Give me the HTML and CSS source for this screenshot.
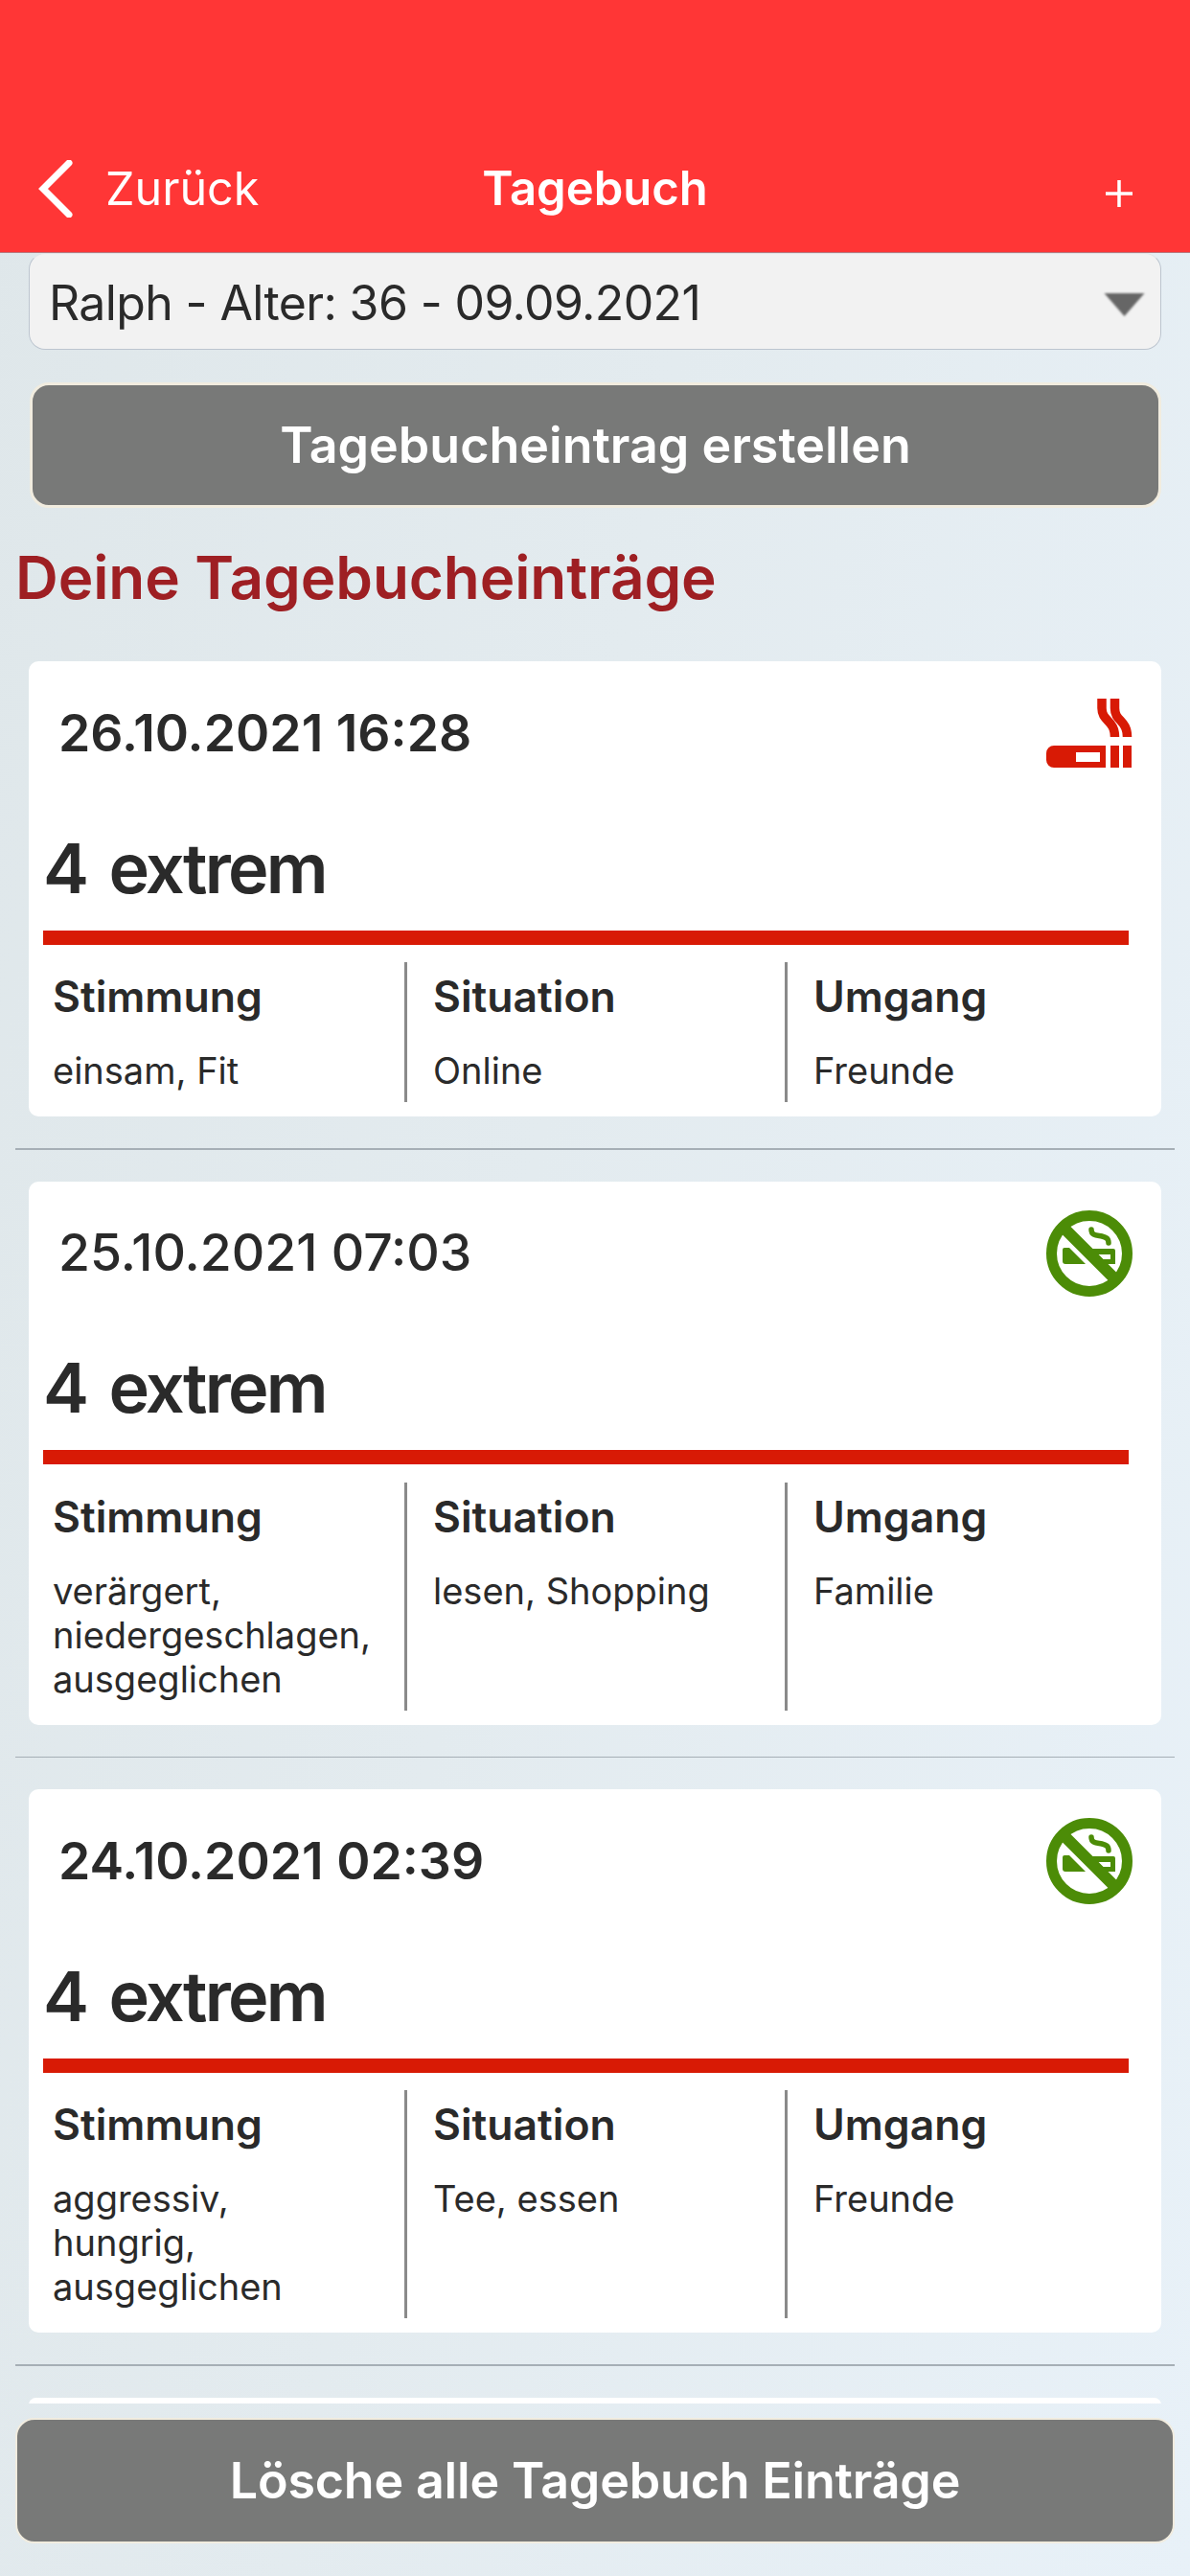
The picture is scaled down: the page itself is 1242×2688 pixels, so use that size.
FILE: index.html
```html
<!DOCTYPE html>
<html lang="de">
<head>
    <meta charset="UTF-8">
    <meta name="viewport" content="width=device-width, initial-scale=1.0">
    <title>Tagebuch</title>
    <link rel="stylesheet" href="styles.css">
</head>
<body>
    <header class="nav-bar">
        <a class="nav-back">
            <svg class="back-icon" viewBox="0 0 36 60"><path d="M32 3 L5 30 L32 57" /></svg>
            <span>Zurück</span>
        </a>
        <span class="nav-title">Tagebuch</span>
        <svg class="plus-icon" viewBox="0 0 28 28"><path d="M14 0 V28 M0 14 H28" /></svg>
    </header>

    <div class="picker">
        <span>Ralph - Alter: 36 - 09.09.2021</span>
        <svg class="picker-arrow" viewBox="0 0 42 24"><path d="M0 0 H42 L21 24 Z" /></svg>
    </div>

    <button class="btn btn-create">Tagebucheintrag erstellen</button>

    <h2 class="section-title">Deine Tagebucheinträge</h2>

    <main class="entries">
        <section class="entry">
            <div class="entry-head">
                <span class="entry-date">26.10.2021 16:28</span>
                <svg class="entry-icon icon-smoke" viewBox="0 0 90 72">
                    <path class="fill" fill-rule="evenodd" d="M8 49 H62 V72 H8 A8 8 0 0 1 0 64 V57 A8 8 0 0 1 8 49 Z M31 56 V66 H56 V56 Z" />
                    <rect class="fill" x="67" y="49" width="9" height="23" />
                    <rect class="fill" x="80" y="49" width="9" height="23" />
                    <path class="smoke" d="M58 0 V10 C58 24 71.500 22 71.500 40" />
                    <path class="smoke" d="M71.500 0 V10 C71.500 24 84.500 22 84.500 40" />
                </svg>
            </div>
            <div class="entry-level">4 extrem</div>
            <div class="entry-bar"></div>
            <div class="entry-cols">
                <div class="entry-col">
                    <h4>Stimmung</h4>
                    <p>einsam, Fit</p>
                </div>
                <div class="entry-col">
                    <h4>Situation</h4>
                    <p>Online</p>
                </div>
                <div class="entry-col">
                    <h4>Umgang</h4>
                    <p>Freunde</p>
                </div>
            </div>
        </section>
        <hr class="entry-line">

        <section class="entry">
            <div class="entry-head">
                <span class="entry-date entry-date-light">25.10.2021 07:03</span>
                <svg class="entry-icon icon-nosmoke" viewBox="0 0 90 90">
                    <path class="fill" d="M19 39 H24 L41 56 H20 A3 3 0 0 1 17 53 V41 A2 2 0 0 1 19 39 Z" />
                    <path class="fill" fill-rule="evenodd" d="M44 40 H70 A2 2 0 0 1 72 42 V56 H60 Z M54 46 L59 51 H67 V46 Z" />
                    <path class="wisp" d="M47 20 C47 27 54 26 58 27 C62 28 65 29 65 34" />
                    <circle class="ring" cx="45" cy="45" r="39.500" />
                    <path class="slash" d="M16 16 L74 74" />
                </svg>
            </div>
            <div class="entry-level">4 extrem</div>
            <div class="entry-bar"></div>
            <div class="entry-cols">
                <div class="entry-col">
                    <h4>Stimmung</h4>
                    <p>verärgert, niedergeschlagen, ausgeglichen</p>
                </div>
                <div class="entry-col">
                    <h4>Situation</h4>
                    <p>lesen, Shopping</p>
                </div>
                <div class="entry-col">
                    <h4>Umgang</h4>
                    <p>Familie</p>
                </div>
            </div>
        </section>
        <hr class="entry-line">

        <section class="entry">
            <div class="entry-head">
                <span class="entry-date">24.10.2021 02:39</span>
                <svg class="entry-icon icon-nosmoke" viewBox="0 0 90 90">
                    <path class="fill" d="M19 39 H24 L41 56 H20 A3 3 0 0 1 17 53 V41 A2 2 0 0 1 19 39 Z" />
                    <path class="fill" fill-rule="evenodd" d="M44 40 H70 A2 2 0 0 1 72 42 V56 H60 Z M54 46 L59 51 H67 V46 Z" />
                    <path class="wisp" d="M47 20 C47 27 54 26 58 27 C62 28 65 29 65 34" />
                    <circle class="ring" cx="45" cy="45" r="39.500" />
                    <path class="slash" d="M16 16 L74 74" />
                </svg>
            </div>
            <div class="entry-level">4 extrem</div>
            <div class="entry-bar"></div>
            <div class="entry-cols">
                <div class="entry-col">
                    <h4>Stimmung</h4>
                    <p>aggressiv, hungrig, ausgeglichen</p>
                </div>
                <div class="entry-col">
                    <h4>Situation</h4>
                    <p>Tee, essen</p>
                </div>
                <div class="entry-col">
                    <h4>Umgang</h4>
                    <p>Freunde</p>
                </div>
            </div>
        </section>
        <hr class="entry-line">

        <section class="entry"></section>
    </main>

    <button class="btn btn-clear">Lösche alle Tagebuch Einträge</button>
</body>
</html>
```

FILE: styles.css
```css
* {
    box-sizing: border-box;
}
body {
    margin: 0;
    height: 2688px;
    overflow: hidden;
    display: flex;
    flex-direction: column;
    font-family: Inter, 'Noto Sans', sans-serif;
    color: #2a2a2a;
    background: linear-gradient(100deg, #dfe7ea 0%, #e3ebef 45%, #e8f1f8 100%);
}

/* top bar */
.nav-bar {
    height: 264px;
    flex-shrink: 0;
    background: #ff3636;
    border-bottom: 1px solid #b8767c;
    color: #fff;
    display: flex;
    align-items: flex-end;
    justify-content: space-between;
    padding: 0 60px 28px 40px;
    position: relative;
}
.nav-back {
    display: flex;
    align-items: center;
    gap: 34px;
    font-size: 48.500px;
}
.nav-back span {
    line-height: 76px;
}
.back-icon {
    width: 36px;
    height: 60px;
    fill: none;
    stroke: #fff;
    stroke-width: 7;
    stroke-linecap: round;
}
.nav-title {
    position: absolute;
    left: 0;
    right: 0;
    bottom: 28px;
    text-align: center;
    font-size: 49px;
    font-weight: 600;
    line-height: 76px;
}
.plus-icon {
    width: 28px;
    height: 28px;
    margin-bottom: 19px;
    fill: none;
    stroke: #fff;
    stroke-width: 3.500;
}

/* person picker */
.picker {
    height: 101px;
    flex-shrink: 0;
    margin: 0 30px;
    padding: 2px 16px 0 20px;
    display: flex;
    align-items: center;
    justify-content: space-between;
    background: #f2f2f2;
    border: 1px solid #bcc5cf;
    border-top-color: #e2e6e8;
    border-radius: 17px;
    font-size: 50px;
    letter-spacing: -0.630px;
}
.picker-arrow {
    width: 43px;
    height: 24px;
    margin-top: 4px;
    fill: #666;
    filter: blur(1px);
}

.btn {
    display: block;
    flex-shrink: 0;
    height: 131px;
    padding: 0;
    background: #787978;
    border: 3px solid #f1ecdf;
    border-radius: 20px;
    color: #fff;
    font-family: inherit;
    font-size: 52px;
    font-weight: 600;
}
.btn-create {
    margin: 34px 30px 0 31px;
    width: 1181px;
}
.btn-clear {
    margin: 15px 16px 34px;
    width: 1210px;
    border-width: 2px;
    letter-spacing: -0.200px;
}

.section-title {
    height: 160px;
    flex-shrink: 0;
    margin: 0;
    padding: 0 0 16px 16px;
    display: flex;
    align-items: center;
    color: #9e1f23;
    font-size: 62px;
    font-weight: 600;
    letter-spacing: -0.100px;
}

/* diary list, cut off above the bottom button */
.entries {
    flex: 1;
    min-height: 0;
    overflow: hidden;
}
.entry {
    margin: 0 30px;
    padding-bottom: 15px;
    background: #fff;
    border-radius: 10px;
}
.entry-head {
    height: 150px;
    padding: 0 30px 2px 31px;
    display: flex;
    align-items: center;
    justify-content: space-between;
}
.entry-date {
    font-size: 53.500px;
    font-weight: 600;
}
.entry-date-light {
    font-weight: 500;
}
.entry-icon {
    width: 90px;
    margin-top: 2px;
}
.icon-smoke {
    height: 72px;
}
.icon-nosmoke {
    height: 90px;
    fill: #4c8c07;
}
.icon-smoke .fill {
    fill: #d81a05;
}
.icon-nosmoke .fill {
    fill: #4c8c07;
}
.smoke {
    fill: none;
    stroke: #d81a05;
    stroke-width: 9.500;
}
.wisp {
    fill: none;
    stroke: #4c8c07;
    stroke-width: 5.500;
    stroke-linecap: round;
}
.ring {
    fill: none;
    stroke: #4c8c07;
    stroke-width: 11;
}
.slash {
    fill: none;
    stroke: #4c8c07;
    stroke-width: 12;
}
.entry-level {
    height: 130.500px;
    padding-left: 15px;
    display: flex;
    align-items: center;
    font-size: 72px;
    font-weight: 600;
    letter-spacing: -2.800px;
    word-spacing: 8px;
}
.entry-bar {
    height: 15px;
    margin: 0 34px 18.500px 15px;
    background: #d81a05;
}
.entry-cols {
    display: grid;
    grid-template-columns: 392px 397px 1fr;
}
.entry-col {
    padding: 6px 30px 10px 27px;
    border-left: 3px solid #8a8a8a;
}
.entry-col:first-child {
    padding-left: 25px;
    border-left: none;
}
.entry-col h4 {
    margin: 0 0 24px;
    font-size: 44.500px;
    font-weight: 600;
    line-height: 60px;
}
.entry-col p {
    margin: 0;
    font-size: 38px;
    line-height: 46px;
}
.entry-line {
    margin: 33px 16px;
    height: 1.600px;
    border: none;
    background: #a6afb6;
}
```
